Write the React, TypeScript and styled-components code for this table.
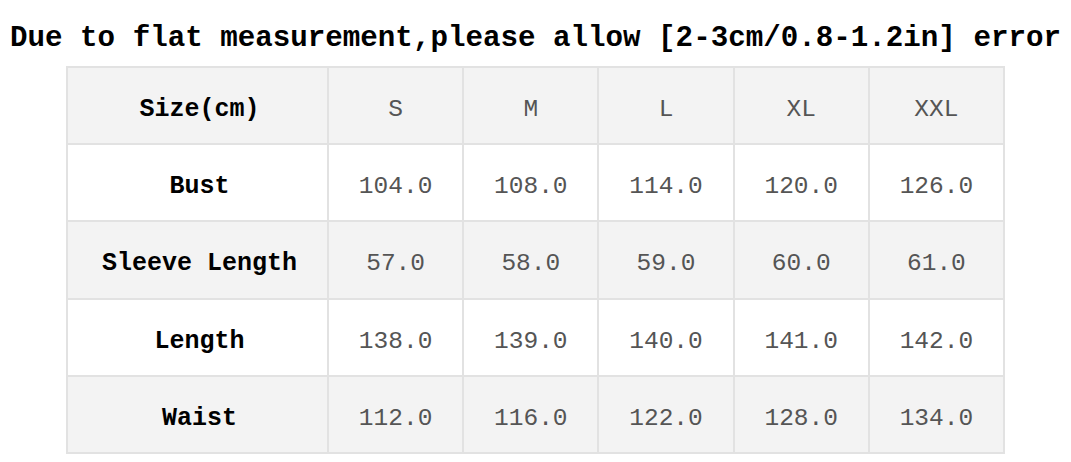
import React from "react";
import styled, { createGlobalStyle } from "styled-components";

const Global = createGlobalStyle`
  html, body { margin: 0; padding: 0; background: #ffffff; }
  body { font-family: "Liberation Mono", "DejaVu Sans Mono", monospace; }
`;

const Page = styled.div`
  width: 1071px;
  display: flex;
  flex-direction: column;
  align-items: center;
`;

const Title = styled.h1`
  margin: 20px 0 0;
  font-size: 29.2px;
  line-height: 38px;
  font-weight: 700;
  color: #000;
  white-space: nowrap;
  text-align: center;
`;

const Grid = styled.div`
  margin-top: 8px;
  width: 939px;
  box-sizing: border-box;
  display: grid;
  grid-template-columns: 259px repeat(5, 1fr);
  grid-auto-rows: 75.2px;
  gap: 2px;
  padding: 2px;
  background: #e2e2e2;
`;

const Cell = styled.div<{ $shade: boolean; $label?: boolean }>`
  display: flex;
  align-items: center;
  justify-content: center;
  box-sizing: border-box;
  padding-top: 8px;
  padding-left: ${(p) => (p.$label ? "4px" : "0")};
  background: ${(p) => (p.$shade ? "#f3f3f3" : "#ffffff")};
  font-size: ${(p) => (p.$label ? "25px" : "24.5px")};
  font-weight: ${(p) => (p.$label ? 700 : 400)};
  color: ${(p) => (p.$label ? "#000" : "#555555")};
  white-space: nowrap;
`;

const header = ["Size(cm)", "S", "M", "L", "XL", "XXL"];
const rows: [string, string[]][] = [
  ["Bust", ["104.0", "108.0", "114.0", "120.0", "126.0"]],
  ["Sleeve Length", ["57.0", "58.0", "59.0", "60.0", "61.0"]],
  ["Length", ["138.0", "139.0", "140.0", "141.0", "142.0"]],
  ["Waist", ["112.0", "116.0", "122.0", "128.0", "134.0"]],
];

export default function App() {
  return (
    <Page>
      <Global />
      <Title>Due to flat measurement,please allow [2-3cm/0.8-1.2in] error</Title>
      <Grid>
        {header.map((h, i) => (
          <Cell key={h} $shade $label={i === 0}>
            {h}
          </Cell>
        ))}
        {rows.map(([label, vals], r) => (
          <React.Fragment key={label}>
            <Cell $shade={r % 2 === 1} $label>
              {label}
            </Cell>
            {vals.map((v, i) => (
              <Cell key={i} $shade={r % 2 === 1}>
                {v}
              </Cell>
            ))}
          </React.Fragment>
        ))}
      </Grid>
    </Page>
  );
}
